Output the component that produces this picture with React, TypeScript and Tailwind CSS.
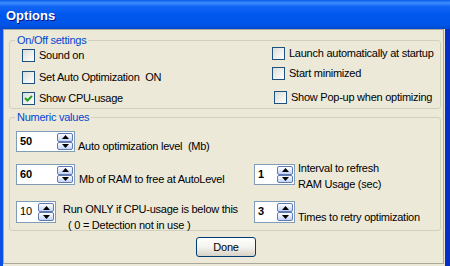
import React from "react";

const Check: React.FC<{ checked?: boolean; label: string; className?: string }> = ({
  checked,
  label,
  className = "",
}) => (
  <div className={`flex h-[13px] items-center ${className}`}>
    <span className="flex h-[13px] w-[13px] shrink-0 items-center justify-center border border-[#1C5180] bg-gradient-to-br from-[#DCDCD7] to-white">
      {checked && (
        <svg width="9" height="9" viewBox="0 0 9 9">
          <path d="M1 4 L3.5 6.5 L8 2" stroke="#21A121" strokeWidth="2" fill="none" />
        </svg>
      )}
    </span>
    <span className="ml-[4px] whitespace-pre text-[11px] leading-[13px] text-black">{label}</span>
  </div>
);

const Arrow: React.FC<{ up?: boolean }> = ({ up }) => (
  <svg width="7" height="4" viewBox="0 0 7 4">
    <path d={up ? "M0 4 L3.5 0 L7 4 Z" : "M0 0 L3.5 4 L7 0 Z"} fill="#000" />
  </svg>
);

const Spin: React.FC<{ value: string; w: string; bold?: boolean; tall?: boolean }> = ({
  value,
  w,
  bold,
  tall,
}) => (
  <div className={`flex shrink-0 border border-[#7F9DB9] bg-white p-[1px] ${w} ${tall ? "h-[22px]" : "h-[21px]"}`}>
    <span className={`flex-1 pl-[2px] text-[11px] leading-[17px] tracking-normal text-black ${bold ? "font-bold" : ""}`}>
      {value}
    </span>
    <div className="flex w-[16px] flex-col">
      <div className="flex flex-1 items-center justify-center rounded-[2px] border border-[#5F7AB0] bg-gradient-to-b from-white to-[#C2D2F8]">
        <Arrow up />
      </div>
      <div className="flex flex-1 items-center justify-center rounded-[2px] border border-[#5F7AB0] bg-gradient-to-b from-white to-[#C2D2F8]">
        <Arrow />
      </div>
    </div>
  </div>
);

export default function App() {
  return (
    <div className="flex h-[266px] w-[450px] flex-col overflow-hidden font-['Liberation_Sans',Arial,sans-serif] text-[11px] tracking-[-0.25px] text-black">
      <div className="flex h-[29px] shrink-0 items-center bg-[linear-gradient(to_bottom,#0A5AE8_0%,#3D8EFF_10%,#1266F5_22%,#0058EE_50%,#0055E8_85%,#0049CC_100%)] px-[6px] pt-[2px]">
        <span className="text-[13px] font-bold tracking-normal text-white [text-shadow:1px_1px_#0F1089]">Options</span>
      </div>

      <div className="flex flex-1 border-l-[3px] border-r-[5px] border-l-[#0B4FE3] border-r-[#0630C4] bg-[#ECE9D8] pb-[2px]">
        <div className="mr-[1px] flex flex-1 flex-col border border-[#ACA899]">
          <fieldset className="ml-[5px] mt-[4px] h-[75px] w-[432px] rounded-[3px] border border-[#D0D0BF]">
            <legend className="ml-[5px] px-[2px] text-[11px] leading-[13px] text-[#0046D5]">On/Off settings</legend>
            <div className="flex">
              <div className="flex w-[262px] flex-col pl-[12px] pt-[2px]">
                <Check label="Sound on" />
                <Check label="Set Auto Optimization  ON" className="mt-[9px]" />
                <Check label="Show CPU-usage" checked className="mt-[8px]" />
              </div>
              <div className="flex flex-col">
                <Check label="Launch automatically at startup" />
                <Check label="Start minimized" className="mt-[7px]" />
                <Check label="Show Pop-up when optimizing" className="ml-[2px] mt-[11px]" />
              </div>
            </div>
          </fieldset>

          <fieldset className="ml-[5px] mt-[2px] h-[120px] w-[432px] rounded-[3px] border border-[#D0D0BF]">
            <legend className="ml-[5px] px-[2px] text-[11px] leading-[13px] text-[#0046D5]">Numeric values</legend>
            <div className="flex flex-col pl-[6px]">
              <div className="mt-[7px] flex items-start">
                <Spin value="50" w="w-[59px]" bold />
                <span className="ml-[3px] mt-[9px] whitespace-pre leading-[13px]">Auto optimization level  (Mb)</span>
              </div>

              <div className="mt-[11px] flex items-start">
                <div className="flex w-[238px] items-start">
                  <Spin value="60" w="w-[59px]" bold />
                  <span className="ml-[4px] mt-[9px] leading-[13px]">Mb of RAM to free at AutoLevel</span>
                </div>
                <div className="flex items-start">
                  <Spin value="1" w="w-[41px]" bold />
                  <div className="-mt-[4px] ml-[3px] flex flex-col leading-[16px]">
                    <span>Interval to refresh</span>
                    <span>RAM Usage (sec)</span>
                  </div>
                </div>
              </div>

              <div className="mt-[9px] flex items-start">
                <div className="flex w-[238px] items-start">
                  <Spin value="10" w="w-[40px]" tall />
                  <div className="ml-[7px] flex flex-col leading-[16px]">
                    <span>Run ONLY if CPU-usage is below this</span>
                    <span className="pl-[5px]">( 0 = Detection not in use )</span>
                  </div>
                </div>
                <div className="flex items-start">
                  <Spin value="3" w="w-[41px]" bold tall />
                  <span className="ml-[3px] mt-[10px] leading-[13px]">Times to retry optimization</span>
                </div>
              </div>
            </div>
          </fieldset>

          <button className="ml-[192px] mt-[6px] h-[20px] w-[60px] rounded-[3px] border border-[#003C74] bg-gradient-to-b from-white via-[#F3F3EF] to-[#D8D2C6] text-[11px] leading-[16px] text-black">
            Done
          </button>
        </div>
      </div>
    </div>
  );
}
